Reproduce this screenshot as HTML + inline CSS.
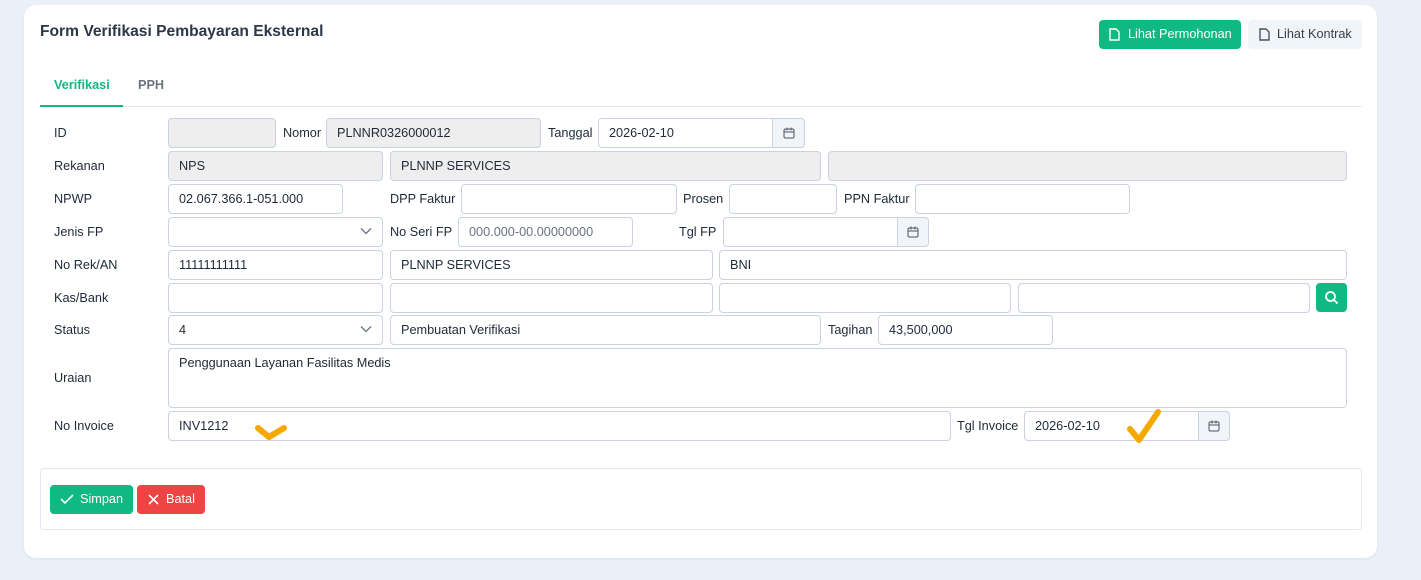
<!DOCTYPE html>
<html><head><meta charset="utf-8"><style>
*{box-sizing:border-box}
body{margin:0;width:1421px;height:580px;background:#eaf0f7;font-family:"Liberation Sans",sans-serif;font-size:12.7px;color:#1f2937;position:relative;overflow:hidden}
.card{position:absolute;left:24px;top:5px;width:1353px;height:553px;background:#fff;border-radius:12px;box-shadow:0 1px 3px rgba(0,0,0,.06)}
.a{position:absolute}
.in{position:absolute;height:30px;border:1px solid #c9d2de;border-radius:4px;background:#fff;padding:0 10px;line-height:28px;font-size:12.7px;color:#1f2937;white-space:nowrap;overflow:hidden}
.dis{background:#eeeeee}
.lb{position:absolute;font-size:12.7px;color:#1f2937;line-height:16px}
.cal{position:absolute;width:32px;height:30px;border:1px solid #c9d2de;border-left:none;border-radius:0 4px 4px 0;background:#f1f4f8;display:flex;align-items:center;justify-content:center}
.chev{position:absolute;right:10px;top:9px}
</style></head><body>
<div class="card"></div>
<div class="a" style="left:40px;top:23px;font-size:15.6px;font-weight:bold;color:#2d3748">Form Verifikasi Pembayaran Eksternal</div>
<div class="a" style="left:1099px;top:20px;width:142px;height:29px;background:#10b981;border-radius:4px;color:#fff;line-height:29px;padding-left:29px">Lihat Permohonan
<svg class="a" style="left:10px;top:8px" width="11" height="13" viewBox="0 0 11 13"><path d="M1 1h6l3 3v8H1z" fill="none" stroke="#fff" stroke-width="1.4"/></svg></div>
<div class="a" style="left:1248px;top:20px;width:114px;height:29px;background:#f1f4f8;border-radius:4px;color:#374151;line-height:29px;padding-left:29px">Lihat Kontrak
<svg class="a" style="left:11px;top:8px" width="11" height="13" viewBox="0 0 11 13"><path d="M1 1h6l3 3v8H1z" fill="none" stroke="#4b5563" stroke-width="1.4"/></svg></div>
<div class="a" style="left:54px;top:78px;font-weight:bold;color:#10b981">Verifikasi</div>
<div class="a" style="left:138px;top:78px;font-weight:bold;color:#6b7280">PPH</div>
<div class="a" style="left:40px;top:106px;width:1322px;height:1px;background:#e2e8f0"></div>
<div class="a" style="left:40px;top:105px;width:83px;height:2px;background:#10b981"></div>

<div class="lb" style="left:54px;top:125px">ID</div>
<div class="in dis" style="left:168px;top:118px;width:108px"></div>
<div class="lb" style="left:283px;top:125px">Nomor</div>
<div class="in dis" style="left:326px;top:118px;width:215px">PLNNR0326000012</div>
<div class="lb" style="left:548px;top:125px">Tanggal</div>
<div class="in" style="left:598px;top:118px;width:175px;border-radius:4px 0 0 4px">2026-02-10</div>
<div class="cal" style="left:773px;top:118px"><svg width="12" height="12" viewBox="0 0 12 12"><rect x="1" y="2" width="10" height="9" rx="1.5" fill="none" stroke="#4b5563"/><path d="M1 5h10M4 0.5v3M8 0.5v3" stroke="#4b5563"/></svg></div>

<div class="lb" style="left:54px;top:158px">Rekanan</div>
<div class="in dis" style="left:168px;top:151px;width:215px">NPS</div>
<div class="in dis" style="left:390px;top:151px;width:431px">PLNNP SERVICES</div>
<div class="in dis" style="left:828px;top:151px;width:519px"></div>

<div class="lb" style="left:54px;top:191px">NPWP</div>
<div class="in" style="left:168px;top:184px;width:175px">02.067.366.1-051.000</div>
<div class="lb" style="left:390px;top:191px">DPP Faktur</div>
<div class="in" style="left:461px;top:184px;width:216px"></div>
<div class="lb" style="left:683px;top:191px">Prosen</div>
<div class="in" style="left:729px;top:184px;width:108px"></div>
<div class="lb" style="left:844px;top:191px">PPN Faktur</div>
<div class="in" style="left:915px;top:184px;width:215px"></div>

<div class="lb" style="left:54px;top:224px">Jenis FP</div>
<div class="in" style="left:168px;top:217px;width:215px"><svg class="chev" width="12" height="8" viewBox="0 0 12 8"><path d="M1 1.5l5 5 5-5" fill="none" stroke="#6b7280" stroke-width="1.3"/></svg></div>
<div class="lb" style="left:390px;top:224px">No Seri FP</div>
<div class="in" style="left:458px;top:217px;width:175px;color:#6b7280">000.000-00.00000000</div>
<div class="lb" style="left:679px;top:224px">Tgl FP</div>
<div class="in" style="left:723px;top:217px;width:175px;border-radius:4px 0 0 4px"></div>
<div class="cal" style="left:898px;top:217px;width:31px"><svg width="12" height="12" viewBox="0 0 12 12"><rect x="1" y="2" width="10" height="9" rx="1.5" fill="none" stroke="#4b5563"/><path d="M1 5h10M4 0.5v3M8 0.5v3" stroke="#4b5563"/></svg></div>

<div class="lb" style="left:54px;top:257px">No Rek/AN</div>
<div class="in" style="left:168px;top:250px;width:215px">11111111111</div>
<div class="in" style="left:390px;top:250px;width:323px">PLNNP SERVICES</div>
<div class="in" style="left:719px;top:250px;width:628px">BNI</div>

<div class="lb" style="left:54px;top:290px">Kas/Bank</div>
<div class="in" style="left:168px;top:283px;width:215px"></div>
<div class="in" style="left:390px;top:283px;width:323px"></div>
<div class="in" style="left:719px;top:283px;width:292px"></div>
<div class="in" style="left:1018px;top:283px;width:292px"></div>
<div class="a" style="left:1316px;top:283px;width:31px;height:29px;background:#10b981;border-radius:4px"><svg class="a" style="left:8px;top:7px" width="15" height="15" viewBox="0 0 15 15"><circle cx="6.5" cy="6.5" r="4.5" fill="none" stroke="#fff" stroke-width="1.8"/><path d="M10 10l3.5 3.5" stroke="#fff" stroke-width="1.8"/></svg></div>

<div class="lb" style="left:54px;top:322px">Status</div>
<div class="in" style="left:168px;top:315px;width:215px">4<svg class="chev" width="12" height="8" viewBox="0 0 12 8"><path d="M1 1.5l5 5 5-5" fill="none" stroke="#6b7280" stroke-width="1.3"/></svg></div>
<div class="in" style="left:390px;top:315px;width:431px">Pembuatan Verifikasi</div>
<div class="lb" style="left:828px;top:322px">Tagihan</div>
<div class="in" style="left:878px;top:315px;width:175px">43,500,000</div>

<div class="lb" style="left:54px;top:370px">Uraian</div>
<div class="in" style="left:168px;top:348px;width:1179px;height:60px;line-height:16px;padding-top:6px">Penggunaan Layanan Fasilitas Medis</div>

<div class="lb" style="left:54px;top:418px">No Invoice</div>
<div class="in" style="left:168px;top:411px;width:783px">INV1212</div>
<div class="lb" style="left:957px;top:418px">Tgl Invoice</div>
<div class="in" style="left:1024px;top:411px;width:175px;border-radius:4px 0 0 4px">2026-02-10</div>
<div class="cal" style="left:1199px;top:411px;width:31px"><svg width="12" height="12" viewBox="0 0 12 12"><rect x="1" y="2" width="10" height="9" rx="1.5" fill="none" stroke="#4b5563"/><path d="M1 5h10M4 0.5v3M8 0.5v3" stroke="#4b5563"/></svg></div>
<svg class="a" style="left:254px;top:422px" width="34" height="22" viewBox="0 0 34 22"><path d="M4 6l11 9 15-9" fill="none" stroke="#f5a800" stroke-width="6" stroke-linecap="round" stroke-linejoin="round"/></svg>
<svg class="a" style="left:1125px;top:408px" width="38" height="36" viewBox="0 0 38 36"><path d="M5 21l9 11L33 4" fill="none" stroke="#f5a800" stroke-width="6" stroke-linecap="round" stroke-linejoin="round"/></svg>

<div class="a" style="left:40px;top:468px;width:1322px;height:62px;border:1px solid #e2e8f0;border-radius:4px"></div>
<div class="a" style="left:50px;top:485px;width:83px;height:29px;background:#10b981;border-radius:4px;color:#fff;line-height:29px;padding-left:30px">Simpan
<svg class="a" style="left:10px;top:8px" width="14" height="12" viewBox="0 0 14 12"><path d="M1 6l4 4 8-8" fill="none" stroke="#fff" stroke-width="1.6"/></svg></div>
<div class="a" style="left:137px;top:485px;width:68px;height:29px;background:#ef4444;border-radius:4px;color:#fff;line-height:29px;padding-left:29px">Batal
<svg class="a" style="left:11px;top:9px" width="11" height="11" viewBox="0 0 11 11"><path d="M1 1l9 9M10 1l-9 9" stroke="#fff" stroke-width="1.6"/></svg></div>
</body></html>
